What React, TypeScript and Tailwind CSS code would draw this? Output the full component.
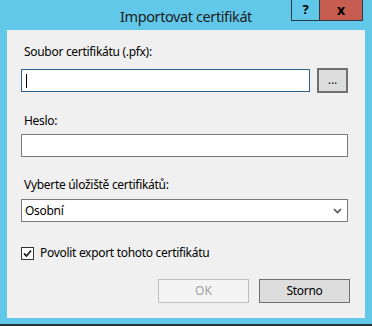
import React from "react";

const font = { fontFamily: '"Noto Sans", "Open Sans", sans-serif' };

function Label({ text, className }: { text: string; className?: string }) {
  return (
    <div className={`h-[16px] pl-[3px] text-[12px] leading-[16px] tracking-[-0.3px] text-[#000] ${className ?? ""}`}>
      {text}
    </div>
  );
}

export default function App() {
  return (
    <div
      className="w-[372px] h-[326px] bg-[#62c8ea] flex flex-col overflow-hidden"
      style={font}
    >
      {/* title bar */}
      <div className="relative h-[30px] flex items-center justify-center">
        <span className="text-[14.5px] leading-[20px] tracking-[-0.4px] text-[#1c1c1c] pt-[1px]">
          Importovat certifikát
        </span>
        <div className="absolute top-0 right-[9px] flex h-[21px]">
          <div className="w-[29px] h-full border border-[#2c3a44] border-t-0 flex items-center justify-center text-[13px] font-bold text-black">
            ?
          </div>
          <div className="w-[43px] h-full bg-[#c75c50] border border-[#2c3a44] border-t-0 border-l-0 flex items-center justify-center text-[14px] font-bold text-black leading-none">
            x
          </div>
        </div>
      </div>

      {/* client area */}
      <div className="mx-[7px] h-[288px] bg-[#f0f0f0] pl-[14px] pr-[15px] flex flex-col">
        <Label text="Soubor certifikátu (.pfx):" className="mt-[14px]" />
        <div className="mt-[8px] h-[25px] flex items-center">
          <div className="w-[289px] h-[23px] bg-white border border-[#2e5f8c] flex items-center pl-[4px]">
            <div className="w-[1px] h-[14px] bg-black" />
          </div>
          <div className="ml-[7px] w-[31px] h-[25px] bg-[#dddddd] border-2 border-[#707070] flex items-center justify-center">
            <span className="text-[12px] leading-none text-[#1a1a3a] -mt-[2px]">...</span>
          </div>
        </div>

        <Label text="Heslo:" className="mt-[20px]" />
        <div className="mt-[5px] w-[327px] h-[23px] bg-white border border-[#7a7a7a]" />

        <Label text="Vyberte úložiště certifikátů:" className="mt-[20px]" />
        <div className="mt-[6px] w-[327px] h-[23px] bg-white border border-[#7a7a7a] flex items-center justify-between pl-[3px] pr-[5px]">
          <span className="text-[12px] leading-[16px] tracking-[-0.3px] text-black">Osobní</span>
          <svg width="9" height="6" viewBox="0 0 9 6">
            <path d="M1 1 L4.5 4.5 L8 1" fill="none" stroke="#555" strokeWidth="1.6" />
          </svg>
        </div>

        <div className="mt-[23px] h-[16px] flex items-center">
          <div className="w-[13px] h-[13px] bg-white border border-[#333] flex items-center justify-center">
            <svg width="9" height="9" viewBox="0 0 9 9">
              <path d="M1 4.5 L3.5 7 L8 1.5" fill="none" stroke="#222" strokeWidth="1.8" />
            </svg>
          </div>
          <span className="ml-[6px] text-[12px] leading-[16px] tracking-[-0.3px] text-black">
            Povolit export tohoto certifikátu
          </span>
        </div>

        <div className="mt-[18px] flex justify-end gap-[10px]">
          <div className="w-[91px] h-[24px] bg-[#f4f4f4] border border-[#bfbfbf] flex items-center justify-center text-[12px] text-[#a0a0a0]">
            OK
          </div>
          <div className="w-[91px] h-[24px] bg-[#dddddd] border border-[#707070] flex items-center justify-center text-[12px] tracking-[-0.3px] text-black">
            Storno
          </div>
        </div>
      </div>

      <div className="mt-auto h-[2px] bg-[#24323b]" />
    </div>
  );
}
